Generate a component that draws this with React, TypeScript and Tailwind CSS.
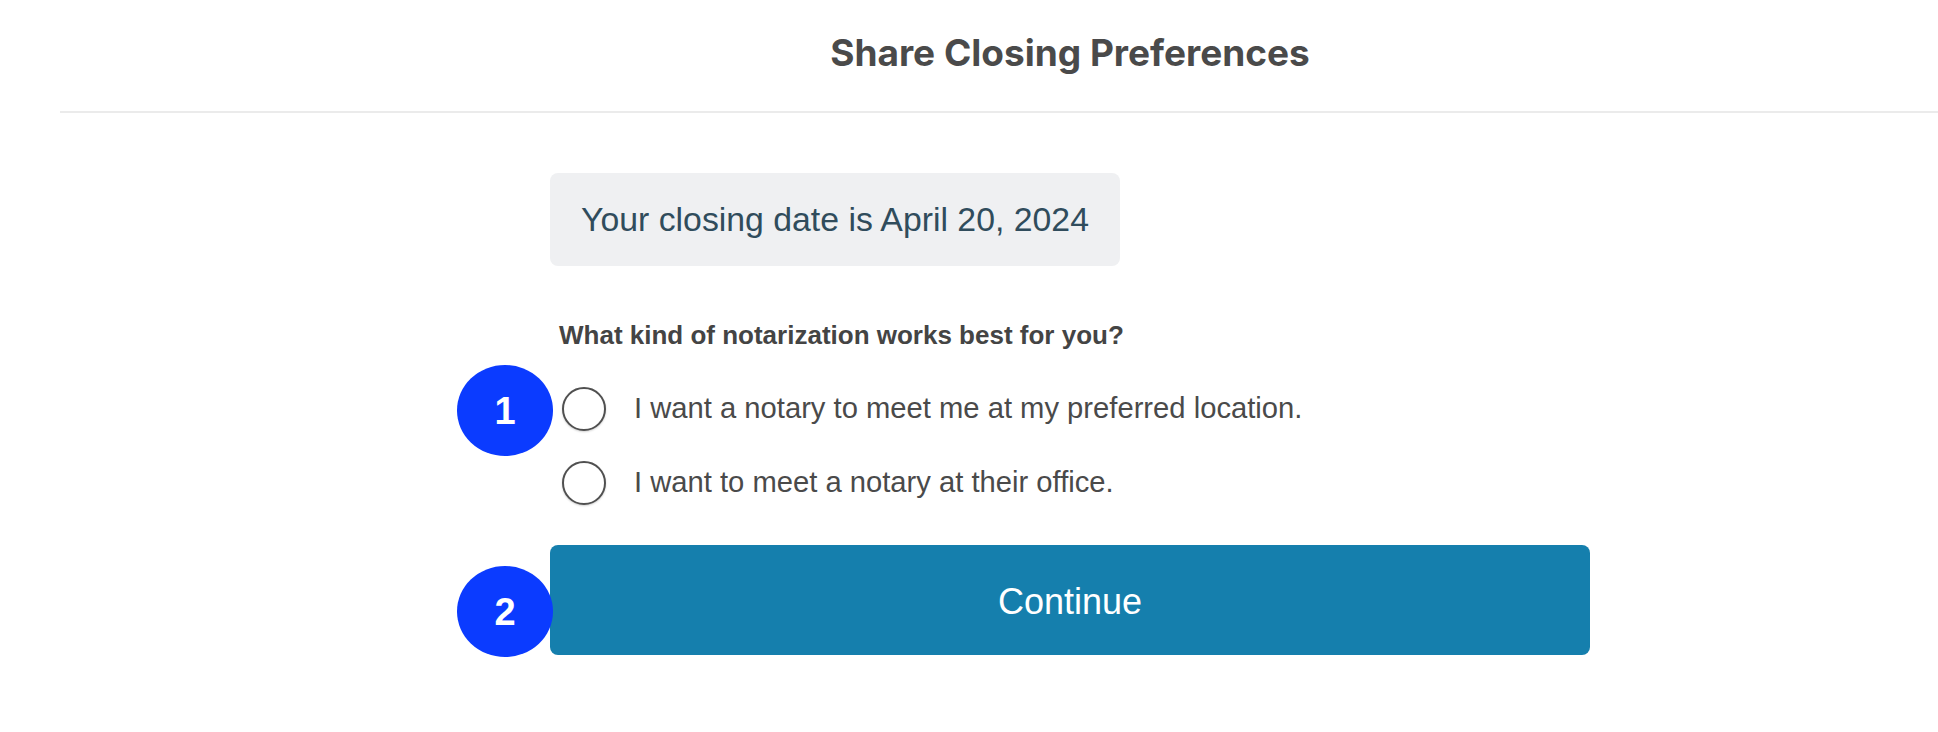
import React from "react";

const options = [
  "I want a notary to meet me at my preferred location.",
  "I want to meet a notary at their office.",
];

function StepBadge({ n, className }: { n: number; className: string }) {
  return (
    <span
      className={`absolute z-10 flex h-[91px] w-[96px] items-center justify-center rounded-[50%] bg-[#0b3bff] text-[38px] font-bold leading-none text-white ${className}`}
      style={{ fontFamily: '"Liberation Sans", Arial, sans-serif' }}
    >
      {n}
    </span>
  );
}

export default function App() {
  return (
    <div
      className="min-h-[732px] w-full bg-white text-[#4a4a4a]"
      style={{ fontFamily: '"Liberation Sans", Arial, sans-serif' }}
    >
      <header className="ml-[60px] border-b-2 border-[#ebebeb] pt-[33px] pb-[38px]">
        <h1
          className="ml-[490px] w-[1040px] text-center text-[37px] font-bold leading-[40px] text-[#4a4a4a]"
          style={{ fontFamily: 'Inter, "Liberation Sans", sans-serif' }}
        >
          Share Closing Preferences
        </h1>
      </header>

      <main className="ml-[550px] flex w-[1040px] flex-col pt-[60px]">
        <div className="flex h-[93px] w-[570px] items-center whitespace-nowrap rounded-lg bg-[#eff0f2] pl-[31px] text-[33.8px] text-[#304c5c]">
          Your closing date is April 20, 2024
        </div>

        <p className="mt-[53px] ml-[9px] text-[26px] font-bold leading-[32px] text-[#444]">
          What kind of notarization works best for you?
        </p>

        <div className="mt-[21px] flex flex-col">
          {options.map((label, i) => (
            <label key={label} className="relative flex h-[74px] cursor-pointer items-center">
              {i === 0 && <StepBadge n={1} className="-left-[93px] top-[-7px]" />}
              <span className="ml-[12px] h-[44px] w-[44px] shrink-0 rounded-full border-2 border-[#505050] bg-white shadow-[0_1px_2px_rgba(0,0,0,0.18)]" />
              <span className="ml-[28px] whitespace-nowrap text-[29.2px] leading-none text-[#4a4a4a]">
                {label}
              </span>
            </label>
          ))}
        </div>

        <div className="relative mt-[25px]">
          <StepBadge n={2} className="-left-[93px] top-[21px]" />
          <button className="flex h-[110px] w-full items-center justify-center rounded-lg bg-[#157fad] pt-[3px] text-[36px] text-white">
            Continue
          </button>
        </div>
      </main>
    </div>
  );
}
